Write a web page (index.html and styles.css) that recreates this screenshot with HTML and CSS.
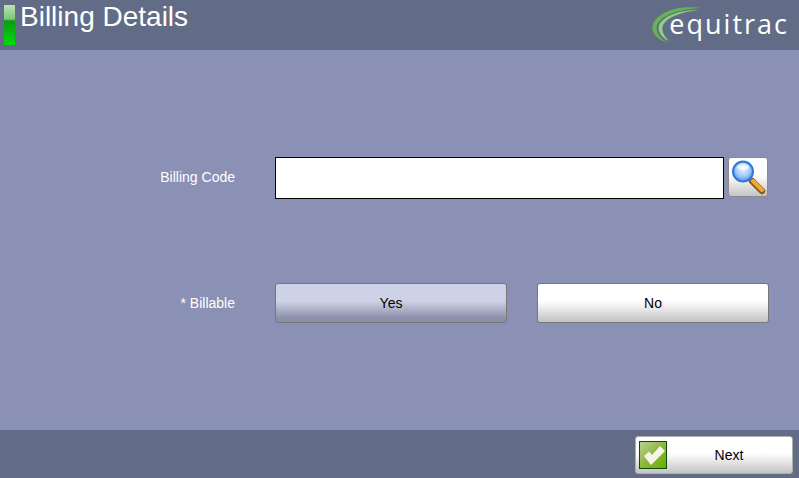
FILE: index.html
```html
<!DOCTYPE html>
<html lang="en">
<head>
  <meta charset="UTF-8" />
  <title>Billing Details</title>
  <link rel="stylesheet" href="styles.css">
</head>
<body>
  <header class="top-bar">
    <div class="title-group">
      <div class="status-bar"></div>
      <h1>Billing Details</h1>
    </div>
    <div class="logo">
      <svg class="logo-swoosh" width="50" height="36" viewBox="0 0 50 36">
        <path d="M50 1 C30 -2 7 3 1 17 C-2 26 6 33 16 36 C8 32 3 25 5 18 C10 7 30 2 50 1 Z" fill="#63b553"/>
        <path d="M46 3 C30 3 12 8 7 18 C5 25 10 31 17 34 C12 29 9 24 11 18 C15 10 30 5 46 3 Z" fill="#8fd080"/>
      </svg>
      <span class="logo-text">equitrac</span>
    </div>
  </header>

  <main class="content">
    <div class="form-row code-row">
      <label class="field-label">Billing Code</label>
      <input type="text" class="code-input" />
      <button class="search-btn" aria-label="Search">
        <svg width="36" height="36" viewBox="0 0 36 36">
          <defs>
            <radialGradient id="lens" cx="50%" cy="40%" r="60%">
              <stop offset="0%" stop-color="#e8f3ff"/>
              <stop offset="55%" stop-color="#a5cdf8"/>
              <stop offset="100%" stop-color="#4f94ea"/>
            </radialGradient>
          </defs>
          <path d="M22 22 L32 32" stroke="#8a5a1c" stroke-width="6.5" stroke-linecap="round"/>
          <path d="M23 22 L32 31" stroke="#eda83c" stroke-width="4" stroke-linecap="round"/>
          <circle cx="13" cy="12.5" r="10" fill="url(#lens)" stroke="#2f78d8" stroke-width="2"/>
          <ellipse cx="13" cy="8" rx="6" ry="3" fill="#fff" opacity="0.7"/>
        </svg>
      </button>
    </div>

    <div class="form-row billable-row">
      <label class="field-label">* Billable</label>
      <div class="choice-group">
        <button class="choice selected">Yes</button>
        <button class="choice">No</button>
      </div>
    </div>
  </main>

  <footer class="bottom-bar">
    <button class="next-btn">
      <span class="check-box">
        <svg width="24" height="24" viewBox="0 0 24 24">
          <path d="M3 13 L8 8.5 L11 12 L19 3 L24 8 L10 22 Z" fill="#f5f5e6"/>
        </svg>
      </span>
      <span class="next-label">Next</span>
    </button>
  </footer>
</body>
</html>
```

FILE: styles.css
```css
* {
  box-sizing: border-box;
}

body {
  margin: 0;
  display: flex;
  flex-direction: column;
  height: 478px;
  overflow: hidden;
  font-family: "Liberation Sans", Arial, sans-serif;
  background: #8b90b5;
}

.top-bar {
  height: 50px;
  background: #636c86;
  display: flex;
  justify-content: space-between;
  padding: 5px 10px 0 4px;
}

.title-group {
  display: flex;
  gap: 5px;
}

.status-bar {
  width: 11px;
  height: 40px;
  background: linear-gradient(#bce2b4 0, #80c678 14px, #0a9c12 16px, #00dc0c 100%);
}

h1 {
  margin: -4px 0 0 0;
  font-size: 28px;
  font-weight: normal;
  line-height: 31px;
  color: white;
}

.logo {
  display: flex;
  align-items: flex-start;
}

.logo-swoosh {
  margin-top: 2px;
  margin-right: -33px;
}

.logo-text {
  font-family: "Open Sans", sans-serif;
  font-size: 27px;
  line-height: 38px;
  letter-spacing: 2px;
  color: white;
}

.content {
  flex: 1;
  padding-top: 107px;
}

.form-row {
  display: flex;
  align-items: center;
}

.code-row {
  height: 42px;
  align-items: flex-start;
}

.billable-row {
  margin-top: 84px;
  height: 40px;
}

.field-label {
  width: 235px;
  margin-right: 40px;
  text-align: right;
  font-size: 14px;
  color: white;
}

.code-row .field-label {
  line-height: 40px;
}

.code-input {
  width: 449px;
  height: 42px;
  border: 1px solid black;
  background: white;
  margin-right: 4px;
}

button {
  font-family: inherit;
  font-size: 14px;
  color: black;
  cursor: pointer;
  padding: 0;
}

.search-btn {
  width: 40px;
  height: 40px;
  border: 1px solid #8a8a8a;
  border-radius: 3px;
  background: linear-gradient(#ffffff 45%, #c4c4c4 100%);
  display: flex;
  align-items: center;
  justify-content: center;
}

.choice-group {
  display: flex;
  gap: 30px;
}

.choice {
  width: 232px;
  height: 40px;
  border: 1px solid #777;
  border-radius: 3px;
  background: linear-gradient(#ffffff 45%, #c2c2c2 100%);
}

.choice.selected {
  background: linear-gradient(#ced2e6 45%, #8b8fa9 90%);
}

.bottom-bar {
  height: 48px;
  background: #636c86;
  display: flex;
  justify-content: flex-end;
  align-items: flex-start;
  padding: 6px 6px 0 0;
}

.next-btn {
  width: 158px;
  height: 38px;
  border: 1px solid #b0b0b0;
  border-radius: 3px;
  background: linear-gradient(#ffffff 45%, #c4c4c4 100%);
  display: flex;
  align-items: center;
  padding-left: 3px;
}

.check-box {
  width: 28px;
  height: 28px;
  border: 1px solid #0c4d0a;
  background: linear-gradient(135deg, #bcd09a 0, #8cb83a 50%, #68b000 100%);
  display: flex;
  align-items: center;
  justify-content: center;
}

.next-label {
  flex: 1;
  text-align: center;
  padding-right: 1px;
}
```
